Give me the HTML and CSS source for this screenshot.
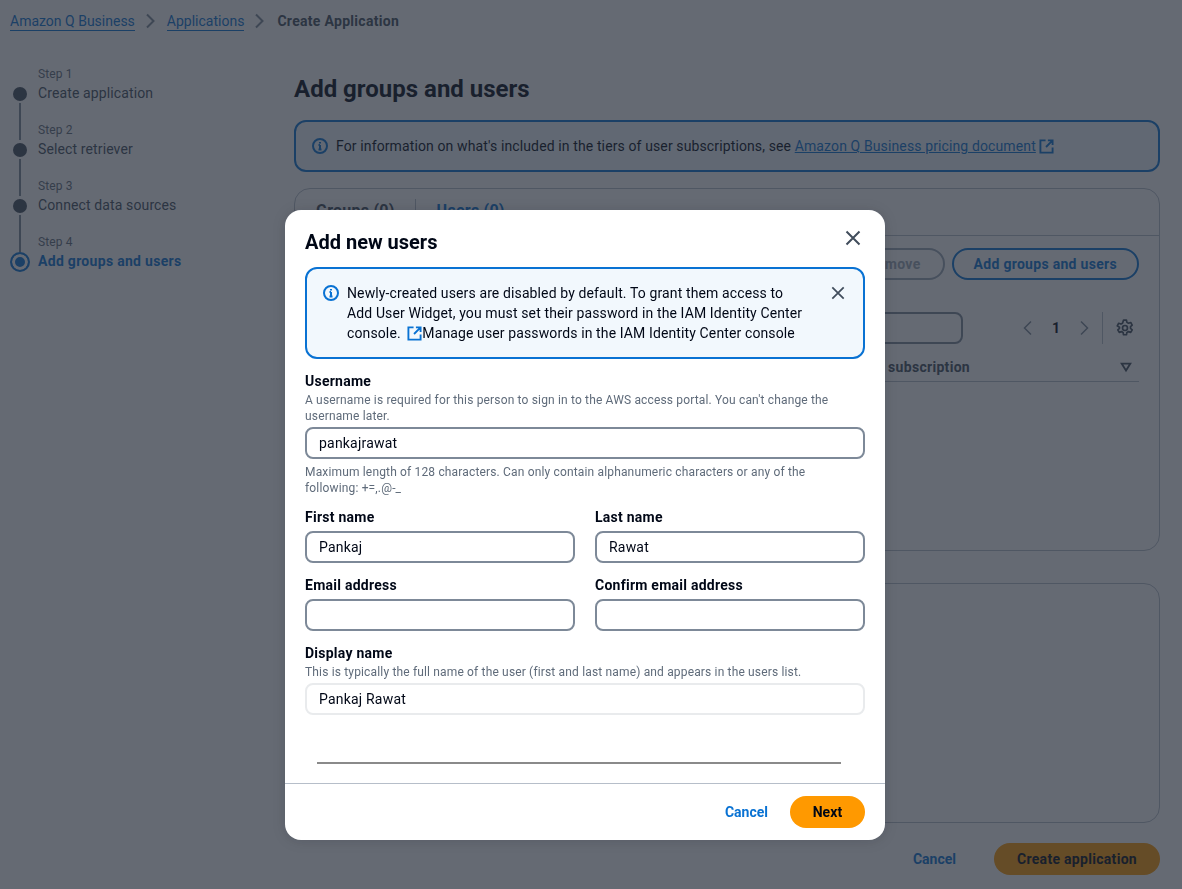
FILE: index.html
```html
<!DOCTYPE html>
<html lang="en">
<head>
<meta charset="utf-8">
<meta name="viewport" content="width=device-width, initial-scale=1">
<title>Create Application | Amazon Q Business</title>
<link rel="stylesheet" href="styles.css">
</head>
<body>

<div class="page">
  <nav class="breadcrumbs">
    <a href="#">Amazon Q Business</a>
    <svg class="crumb-sep" viewBox="0 0 16 16"><path d="M4 1.500 10.500 8 4 14.500"/></svg>
    <a href="#">Applications</a>
    <svg class="crumb-sep" viewBox="0 0 16 16"><path d="M4 1.500 10.500 8 4 14.500"/></svg>
    <span class="crumb-current">Create Application</span>
  </nav>

  <div class="layout">
    <ol class="steps">
      <li class="step"><small>Step 1</small><span>Create application</span></li>
      <li class="step"><small>Step 2</small><span>Select retriever</span></li>
      <li class="step"><small>Step 3</small><span>Connect data sources</span></li>
      <li class="step active"><small>Step 4</small><span>Add groups and users</span></li>
    </ol>

    <main class="content">
      <h1>Add groups and users</h1>

      <div class="page-alert">
        <svg class="icon-info" viewBox="0 0 16 16"><circle cx="8" cy="8" r="7"/><path d="M8 7v4.500M6.500 11.500h3M6.500 7H8"/><path d="M8 4v1.600"/></svg>
        <p>For information on what's included in the tiers of user subscriptions, see <a href="#">Amazon Q Business pricing document </a></p>
        <svg class="icon-ext" viewBox="0 0 16 16"><path d="M7 1.500H1.500v13h13V9M9.500 1.500h5V6.500M14.500 1.500 7.500 8.500"/></svg>
      </div>

      <section class="panel panel-users">
        <div class="tabs">
          <span class="tab">Groups (0)</span>
          <span class="tab tab-on">Users (0)</span>
        </div>
        <div class="panel-actions">
          <button class="btn-line btn-off">Remove</button>
          <button class="btn-line">Add groups and users</button>
        </div>
        <div class="table-tools">
          <div class="search"></div>
          <svg class="pager-arrow" viewBox="0 0 16 16"><path d="M11 1.500 4.500 8l6.500 6.500"/></svg>
          <b class="pager-num">1</b>
          <svg class="pager-arrow" viewBox="0 0 16 16"><path d="M5 1.500 11.500 8 5 14.500"/></svg>
          <i class="tools-sep"></i>
          <svg class="gear" viewBox="0 0 16 16"><circle cx="8" cy="8" r="2.200"/><path d="M6.700 1h2.600l.4 2 1.400.8 2-.7 1.300 2.300-1.500 1.300v1.600l1.500 1.300-1.300 2.300-2-.7-1.400.8-.4 2H6.700l-.4-2-1.400-.8-2 .7-1.300-2.300 1.500-1.300V7.400L1.100 6.100l1.300-2.300 2 .7 1.400-.8z"/></svg>
        </div>
        <div class="table-head">
          <span>Current subscription</span>
          <svg class="sort" viewBox="0 0 16 16"><path d="M3 4h10L8 12z"/></svg>
        </div>
      </section>

      <section class="panel panel-empty"></section>

      <div class="page-foot">
        <a class="link-btn" href="#">Cancel</a>
        <button class="btn-main">Create application</button>
      </div>
    </main>
  </div>
</div>

<div class="overlay">
  <div class="modal">
    <div class="modal-head">
      <h2>Add new users</h2>
      <svg class="icon-x" viewBox="0 0 16 16"><path d="M1.500 1.500l13 13M14.500 1.500l-13 13"/></svg>
    </div>

    <div class="modal-body">
      <div class="alert">
        <svg class="icon-info" viewBox="0 0 16 16"><circle cx="8" cy="8" r="7"/><path d="M8 7v4.500M6.500 11.500h3M6.500 7H8"/><path d="M8 4v1.600"/></svg>
        <div class="alert-text">
          <p>Newly-created users are disabled by default. To grant them access to Add User Widget, you must set their password in the IAM Identity Center</p>
          <p>console. <svg class="icon-ext" viewBox="0 0 16 16"><path d="M7 1.500H1.500v13h13V9M9.500 1.500h5V6.500M14.500 1.500 7.500 8.500"/></svg>Manage user passwords in the IAM Identity Center console</p>
        </div>
        <svg class="icon-x small" viewBox="0 0 16 16"><path d="M1.500 1.500l13 13M14.500 1.500l-13 13"/></svg>
      </div>

      <div class="field">
        <label>Username</label>
        <p class="desc">A username is required for this person to sign in to the AWS access portal. You can't change the username later.</p>
        <input type="text" value="pankajrawat">
        <p class="hint">Maximum length of 128 characters. Can only contain alphanumeric characters or any of the following: +=,.@-_</p>
      </div>

      <div class="field-row">
        <div class="field">
          <label>First name</label>
          <input type="text" value="Pankaj">
        </div>
        <div class="field">
          <label>Last name</label>
          <input type="text" value="Rawat">
        </div>
      </div>

      <div class="field-row">
        <div class="field">
          <label>Email address</label>
          <input type="text">
        </div>
        <div class="field">
          <label>Confirm email address</label>
          <input type="text">
        </div>
      </div>

      <div class="field">
        <label>Display name</label>
        <p class="desc">This is typically the full name of the user (first and last name) and appears in the users list.</p>
        <input class="input-soft" type="text" value="Pankaj Rawat">
      </div>

      <hr class="widget-line">
    </div>

    <div class="modal-foot">
      <a class="link-btn" href="#">Cancel</a>
      <button class="btn-main">Next</button>
    </div>
  </div>
</div>

</body>
</html>
```

FILE: styles.css
```css
*, *::before, *::after { box-sizing: border-box; }
html, body { height: 100%; }
body {
  margin: 0;
  font-family: Roboto, "Liberation Sans", sans-serif;
  font-size: 14px;
  line-height: 20px;
  letter-spacing: 0.12px;
  color: #000716;
  background: #fff;
  overflow: hidden;
}
p { margin: 0; }
a { color: #0972d3; }
svg { fill: none; stroke: currentColor; stroke-width: 2; flex: none; }

/* page under the overlay */
.page { padding: 11px 22px 0 10px; }
.breadcrumbs { display: flex; align-items: center; gap: 8px; height: 20px; letter-spacing: 0; }
.breadcrumbs a { text-decoration: none; border-bottom: 1px solid #0972d3; line-height: 18px; }
.crumb-sep { width: 16px; height: 16px; color: #7d8998; }
.crumb-current { margin-left: 1px; font-weight: 700; color: #414d5c; letter-spacing: 0.3px; }

.layout { display: flex; margin-top: 35px; }
.steps { list-style: none; margin: 0; padding: 0; width: 284px; flex: none; }
.step { position: relative; padding-left: 28px; height: 56px; color: #414d5c; }
.step small { display: block; font-size: 12px; line-height: 16px; color: #5f6b7a; }
.step span { display: block; line-height: 22px; }
.step::before {
  content: "";
  position: absolute;
  left: 3px;
  top: 21px;
  width: 14px;
  height: 14px;
  border-radius: 50%;
  background: #414d5c;
}
.step::after {
  content: "";
  position: absolute;
  left: 9px;
  top: 37px;
  width: 2px;
  height: 37px;
  background: #7d8998;
}
.step:last-child::after { display: none; }
.step.active span { color: #0972d3; font-weight: 700; letter-spacing: 0.3px; }
.step.active::before {
  left: 0;
  top: 18px;
  width: 20px;
  height: 20px;
  background: #0972d3;
  border: 2px solid #0972d3;
  box-shadow: inset 0 0 0 3px #fff;
}

.content { flex: 1; min-width: 0; padding-top: 8px; }
h1 { margin: 0; font-size: 24px; line-height: 30px; font-weight: 700; letter-spacing: 0; color: #000716; }

.page-alert {
  display: flex;
  align-items: center;
  gap: 8px;
  height: 52px;
  margin-top: 16px;
  padding: 0 16px;
  border: 2px solid #0972d3;
  border-radius: 12px;
  background: #f2f8fd;
}
.page-alert a { text-decoration: underline; }
.icon-info { width: 16px; height: 16px; color: #0972d3; }
.icon-ext { width: 15px; height: 15px; color: #0972d3; }
.page-alert .icon-ext { margin-left: -5px; }

.panel { border: 1px solid #b6bec9; border-radius: 16px; }
.panel-users { height: 363px; margin-top: 16px; }
.tabs { display: flex; height: 47px; border-bottom: 1px solid #b6bec9; padding-top: 10px; }
.tab { padding: 0 20px 0 21px; height: 24px; font-size: 16px; line-height: 24px; font-weight: 700; letter-spacing: 0.25px; color: #414d5c; }
.tab-on { color: #0972d3; border-left: 1px solid #b6bec9; }
.panel-actions { display: flex; justify-content: flex-end; gap: 7px; padding: 12px 20px 0; }
.btn-line {
  height: 32px;
  padding: 0 20px;
  border: 2px solid #0972d3;
  border-radius: 16px;
  background: #fff;
  color: #0972d3;
  font: 700 14px Roboto, "Liberation Sans", sans-serif;
  letter-spacing: 0.3px;
}
.btn-off { padding: 0 22px; border-color: #9ba7b6; color: #9ba7b6; }
.table-tools { display: flex; align-items: center; height: 32px; margin-top: 32px; padding-right: 26px; justify-content: flex-end; }
.search { width: 400px; height: 32px; margin-right: 57px; border: 2px solid #7d8998; border-radius: 8px; }
.pager-arrow { width: 16px; height: 16px; stroke-width: 1.500; color: #7d8998; }
.pager-num { width: 40px; text-align: center; color: #000716; }
.tools-sep { width: 1px; height: 32px; margin: 0 14px 0 10px; background: #b6bec9; }
.gear { width: 18px; height: 18px; margin: 0 -1px; stroke-width: 1.500; stroke-linejoin: round; color: #414d5c; }
.table-head {
  display: flex;
  justify-content: flex-end;
  align-items: center;
  height: 38px;
  margin: 0 20px;
  padding: 13px 0 4px;
  border-bottom: 1px solid #b6bec9;
  font-weight: 700;
  letter-spacing: 0.3px;
  color: #414d5c;
}
.table-head span { margin-right: 149px; }
.sort { width: 14px; height: 14px; margin-right: 6px; }

.panel-empty { height: 240px; margin-top: 32px; }
.page-foot { display: flex; justify-content: flex-end; align-items: center; gap: 38px; margin-top: 20px; }
.link-btn { font-weight: 700; letter-spacing: 0; text-decoration: none; }
.btn-main {
  height: 32px;
  padding: 0 23px;
  border: 0;
  border-radius: 16px;
  background: #ff9900;
  color: #000716;
  font: 700 14px Roboto, "Liberation Sans", sans-serif;
  letter-spacing: 0.3px;
}

/* dim layer + dialog */
.overlay {
  position: fixed;
  inset: 0;
  padding: 210px 0 0 285px;
  background: rgba(35, 43, 55, 0.7);
}
.modal {
  width: 600px;
  height: 630px;
  display: flex;
  flex-direction: column;
  background: #fff;
  border-radius: 16px;
  box-shadow: 0 1px 14px rgba(0, 7, 22, 0.14);
}
.modal-head { display: flex; align-items: flex-start; justify-content: space-between; height: 57px; padding: 20px 24px 0 20px; }
h2 { margin: 0; font-size: 20px; line-height: 24px; font-weight: 700; letter-spacing: 0; }
.icon-x { width: 16px; height: 16px; color: #414d5c; }
.icon-x.small { width: 14px; height: 14px; margin: 3px 0 0 auto; }

.modal-body { flex: 1; padding: 0 20px; }
.alert {
  display: flex;
  align-items: flex-start;
  height: 92px;
  padding: 14px 18px 0 16px;
  border: 2px solid #0972d3;
  border-radius: 12px;
  background: #f2f8fd;
}
.alert .icon-info { margin: 2px 8px 0 0; }
.alert-text { flex: none; width: 463px; }
.alert .icon-ext { vertical-align: -3px; margin: 0 0 0 3px; }

.alert + .field { margin-top: 12px; }
.field label { display: block; font-weight: 700; line-height: 20px; letter-spacing: 0.25px; }
.desc, .hint { font-size: 12px; line-height: 16px; letter-spacing: 0.16px; color: #5f6b7a; }
.desc { margin: 1px 0 3px; }
.hint { margin-top: 5px; max-width: 520px; }
.field input {
  display: block;
  width: 100%;
  height: 32px;
  padding: 0 12px;
  border: 2px solid #7d8998;
  border-radius: 8px;
  background: #fff;
  color: #000716;
  font: 14px Roboto, "Liberation Sans", sans-serif;
  letter-spacing: 0.2px;
  outline: none;
}
.field input.input-soft { border-color: #e9ebed; }
.field-row { display: grid; grid-template-columns: 1fr 1fr; gap: 20px; margin-top: 11px; }
.field-row label { margin-bottom: 4px; }
.field-row + .field-row { margin-top: 12px; }
.field-row + .field { margin-top: 12px; }
.widget-line { height: 2px; margin: 47px 24px 0 12px; border: 0; background: #8a8a8a; }

.modal-foot {
  display: flex;
  justify-content: flex-end;
  align-items: center;
  gap: 22px;
  height: 57px;
  padding: 0 20px;
  border-top: 1px solid #b6bec9;
}
.modal-foot .btn-main { width: 75px; padding: 0; letter-spacing: 0.1px; }
```
